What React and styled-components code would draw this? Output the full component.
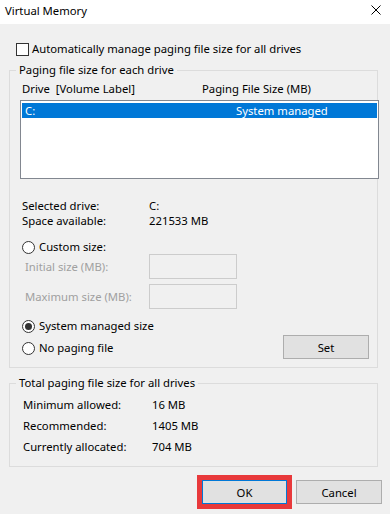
import React from "react";
import styled, { createGlobalStyle } from "styled-components";

const Global = createGlobalStyle`
  html, body { margin: 0; padding: 0; background: #f0f0f0; }
  body {
    font-family: "Noto Sans", "Liberation Sans", sans-serif;
    font-size: 11.3px;
    color: #000;
  }
  * { box-sizing: border-box; }
`;

const Window = styled.div`
  width: 390px;
  height: 514px;
  background: #f0f0f0;
  display: flex;
  flex-direction: column;
  overflow: hidden;
`;

const TitleBar = styled.div`
  height: 24px;
  flex: none;
  background: #fff;
  display: flex;
  justify-content: space-between;
  align-items: flex-start;
  padding: 3px 9px 0 5px;
`;

const Title = styled.span`
  line-height: 16px;
`;

const CloseIcon = styled.svg`
  margin-top: 2px;
  width: 10px;
  height: 10px;
`;

const Body = styled.div`
  display: flex;
  flex-direction: column;
  padding-top: 17px;
`;

const CheckRow = styled.div`
  display: flex;
  align-items: center;
  gap: 3px;
  height: 16px;
  line-height: 16px;
  padding-left: 16px;
`;

const CheckBox = styled.span`
  width: 13px;
  height: 13px;
  border: 1px solid #333;
  background: #fff;
  flex: none;
`;

const Group = styled.fieldset`
  margin: ${(p) => p.$mt}px 0 0 9px;
  width: 369px;
  min-width: 0;
  border: 1px solid #dcdcdc;
  padding: 0 0 ${(p) => p.$pb}px 10px;
`;

const Legend = styled.legend`
  padding: 0 3px;
  margin-left: -4px;
  line-height: 16px;
`;

const Header = styled.div`
  display: grid;
  grid-template-columns: 180px 1fr;
  margin-top: 3px;
  padding-left: 2px;
  line-height: 16px;
  height: 16px;
`;

const ListBox = styled.div`
  margin-top: 3px;
  width: 359px;
  height: 79px;
  border: 1px solid #828790;
  background: #fff;
  padding: 2px 1px 0 1px;
`;

const ListRow = styled.div`
  display: grid;
  grid-template-columns: 211px 1fr;
  height: 15px;
  line-height: 15px;
  padding-left: 3px;
  background: ${(p) => (p.$selected ? "#0078d7" : "transparent")};
  color: ${(p) => (p.$selected ? "#fff" : "#000")};
`;

const InfoGrid = styled.div`
  display: grid;
  grid-template-columns: ${(p) => p.$col}px 1fr;
  margin-top: ${(p) => p.$mt}px;
  padding-left: ${(p) => p.$pl}px;
  line-height: ${(p) => p.$lh}px;
`;

const RadioRow = styled.div`
  display: flex;
  align-items: center;
  gap: 4px;
  height: ${(p) => p.$h || 16}px;
  margin-top: ${(p) => p.$mt || 0}px;
  padding-left: 2px;
  line-height: 16px;
`;

const RadioCircle = styled.span`
  width: 13px;
  height: 13px;
  flex: none;
  border-radius: 50%;
  border: 1px solid #333;
  background: #fff;
  display: flex;
  align-items: center;
  justify-content: center;
  &::after {
    content: "";
    display: ${(p) => (p.$checked ? "block" : "none")};
    width: 7px;
    height: 7px;
    border-radius: 50%;
    background: #333;
  }
`;

const SizeRow = styled.div`
  display: grid;
  grid-template-columns: 124px 88px;
  align-items: center;
  height: 25px;
  margin-top: ${(p) => p.$mt}px;
  padding-left: 5px;
  color: #a0a0a0;
`;

const SizeBox = styled.div`
  height: 25px;
  border: 1px solid #cccccc;
  background: #f0f0f0;
`;

const ChoiceArea = styled.div`
  display: flex;
  justify-content: space-between;
  height: 41px;
  margin-top: 9px;
  padding-right: 8px;
`;

const RadioColumn = styled.div`
  display: flex;
  flex-direction: column;
  gap: 6px;
`;

const Button = styled.button`
  font: inherit;
  color: #000;
  width: ${(p) => p.$w}px;
  height: 24px;
  padding: 0;
  background: #e1e1e1;
  border: 1px solid ${(p) => (p.$default ? "#0078d7" : "#adadad")};
  align-self: ${(p) => p.$align || "auto"};
`;

const ButtonRow = styled.div`
  display: flex;
  justify-content: flex-end;
  align-items: center;
  gap: 4px;
  margin-top: 8px;
  padding-right: 8px;
`;

const Highlight = styled.div`
  border: 5px solid #e8393b;
  display: flex;
`;

export default function App() {
  return (
    <Window>
      <Global />
      <TitleBar>
        <Title>Virtual Memory</Title>
        <CloseIcon viewBox="0 0 10 10">
          <path d="M0.5 0.5 L9.5 9.5 M9.5 0.5 L0.5 9.5" stroke="#000" strokeWidth="1" fill="none" />
        </CloseIcon>
      </TitleBar>
      <Body>
        <CheckRow>
          <CheckBox />
          <span>Automatically manage paging file size for all drives</span>
        </CheckRow>

        <Group $mt={5} $pb={8}>
          <Legend>Paging file size for each drive</Legend>
          <Header>
            <span>Drive&nbsp;&nbsp;[Volume Label]</span>
            <span>Paging File Size (MB)</span>
          </Header>
          <ListBox>
            <ListRow $selected>
              <span>C:</span>
              <span>System managed</span>
            </ListRow>
          </ListBox>
          <InfoGrid $col={127} $mt={19} $pl={2} $lh={15}>
            <span>Selected drive:</span>
            <span>C:</span>
            <span>Space available:</span>
            <span>221533 MB</span>
          </InfoGrid>
          <RadioRow $mt={12} $h={14}>
            <RadioCircle />
            <span>Custom size:</span>
          </RadioRow>
          <SizeRow $mt={0}>
            <span>Initial size (MB):</span>
            <SizeBox />
          </SizeRow>
          <SizeRow $mt={5}>
            <span>Maximum size (MB):</span>
            <SizeBox />
          </SizeRow>
          <ChoiceArea>
            <RadioColumn>
              <RadioRow>
                <RadioCircle $checked />
                <span>System managed size</span>
              </RadioRow>
              <RadioRow>
                <RadioCircle />
                <span>No paging file</span>
              </RadioRow>
            </RadioColumn>
            <Button $w={86} $align="flex-end">Set</Button>
          </ChoiceArea>
        </Group>

        <Group $mt={7} $pb={9}>
          <Legend>Total paging file size for all drives</Legend>
          <InfoGrid $col={129} $mt={3} $pl={3} $lh={21}>
            <span>Minimum allowed:</span>
            <span>16 MB</span>
            <span>Recommended:</span>
            <span>1405 MB</span>
            <span>Currently allocated:</span>
            <span>704 MB</span>
          </InfoGrid>
        </Group>

        <ButtonRow>
          <Highlight>
            <Button $w={85} $default>OK</Button>
          </Highlight>
          <Button $w={86}>Cancel</Button>
        </ButtonRow>
      </Body>
    </Window>
  );
}
